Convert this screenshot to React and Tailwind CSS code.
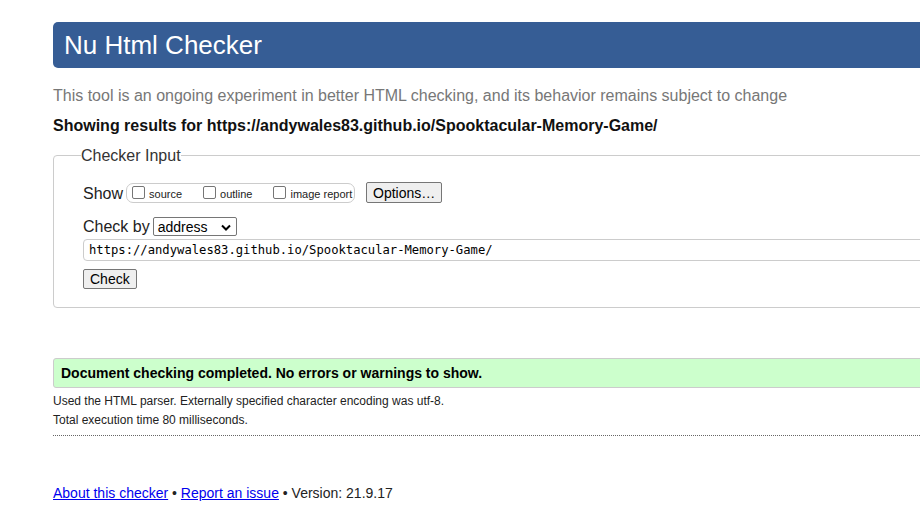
const Checkbox = ({ label }) => (
  <span className="flex flex-none items-center whitespace-nowrap">
    <span className="inline-block h-[13px] w-[13px] rounded-[2px] border border-[#767676] bg-white" />
    <span className="ml-[4px] mt-[3px] text-[11px] leading-[14px] text-[#222]">{label}</span>
  </span>
);

const App = () => {
  return (
    <div className="h-[528px] w-[920px] overflow-hidden bg-white font-['Liberation_Sans',Arial,sans-serif] text-[#222]">
      <div className="w-[1300px] pl-[53px] pt-[22px]">
        <div className="flex h-[46px] items-center rounded-l-[5px] bg-[#365d95] pl-[11px] text-[26px] text-white">
          Nu Html Checker
        </div>

        <p className="mt-[18px] text-[16px] leading-[19px] text-[#777]">
          This tool is an ongoing experiment in better HTML checking, and its behavior remains subject to change
        </p>
        <p className="mt-[11px] text-[16px] font-bold leading-[19px] text-[#111]">
          Showing results for https://andywales83.github.io/Spooktacular-Memory-Game/
        </p>

        <fieldset className="mt-[11px] w-[1100px] rounded-[4px] border border-[#ccc] px-[29px] pb-[16px]">
          <legend className="-ml-[2px] text-[16px] leading-[19px] text-[#333]">Checker Input</legend>

          <div className="mt-[17px] flex h-[21px] items-center">
            <span className="mt-[1px] text-[16px] leading-[19px]">Show</span>
            <div className="ml-[3px] flex h-[20px] w-[229px] flex-none items-center gap-[21px] rounded-[7px] border border-[#ccc] pl-[5px]">
              <Checkbox label="source" />
              <Checkbox label="outline" />
              <Checkbox label="image report" />
            </div>
            <button className="ml-[11px] h-[21px] rounded-[2px] border border-[#767676] bg-[#efefef] px-[6px] text-[14px] leading-[16px] text-black">
              Options…
            </button>
          </div>

          <div className="mt-[14px] flex h-[19px] items-center">
            <span className="text-[16px] leading-[19px]">Check by</span>
            <div className="ml-[3px] flex h-[19px] w-[84px] items-center justify-between rounded-[2px] border border-[#767676] bg-white pl-[4px] pr-[5px] text-[14px] leading-[16px] text-black">
              address
              <svg width="10" height="7" viewBox="0 0 10 7" className="mt-[1px]">
                <path d="M1 1.5 L5 5.5 L9 1.5" fill="none" stroke="#000" strokeWidth="2" />
              </svg>
            </div>
          </div>

          <div className="mt-[3px] flex h-[22px] items-center rounded-[4px] border border-[#ccc] pl-[5px] font-['DejaVu_Sans_Mono',monospace] text-[12.2px] text-black">
            https://andywales83.github.io/Spooktacular-Memory-Game/
          </div>

          <button className="mt-[8px] h-[20px] rounded-[2px] border border-[#767676] bg-[#efefef] px-[6px] text-[14px] leading-[16px] text-black">
            Check
          </button>
        </fieldset>

        <div className="mt-[50px] flex h-[30px] items-center rounded-l-[3px] border border-[#ccc] bg-[#ccffcc] pl-[7px] text-[14px] font-bold text-black">
          Document checking completed. No errors or warnings to show.
        </div>

        <div className="mt-[4px] border-b border-dotted border-[#666] pb-[5px] text-[12px] leading-[19px] text-[#222]">
          <p>Used the HTML parser. Externally specified character encoding was utf-8.</p>
          <p>Total execution time 80 milliseconds.</p>
        </div>

        <p className="mt-[49px] text-[14px] leading-[16px] text-[#222]">
          <a href="#" className="text-[#0000ee] underline">About this checker</a>
          {' • '}
          <a href="#" className="text-[#0000ee] underline">Report an issue</a>
          {' • Version: 21.9.17'}
        </p>
      </div>
    </div>
  );
};

export default App;
